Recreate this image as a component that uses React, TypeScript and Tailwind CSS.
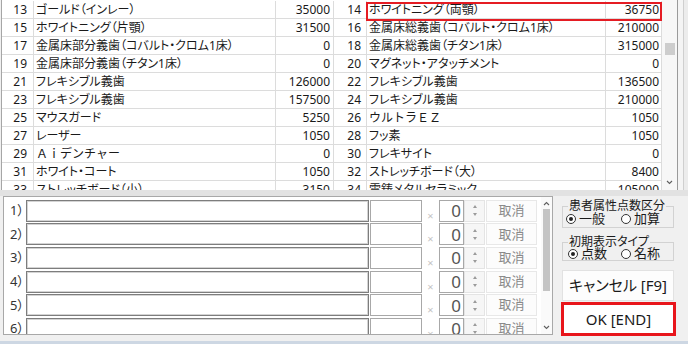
const leftRows = [
  ["13", "ゴールド（インレー）", "35000"],
  ["15", "ホワイトニング（片顎）", "31500"],
  ["17", "金属床部分義歯（コバルト・クロム1床）", "0"],
  ["19", "金属床部分義歯（チタン1床）", "0"],
  ["21", "フレキシブル義歯", "126000"],
  ["23", "フレキシブル義歯", "157500"],
  ["25", "マウスガード", "5250"],
  ["27", "レーザー", "1050"],
  ["29", "Ａｉデンチャー", "0"],
  ["31", "ホワイト・コート", "1050"],
  ["33", "ストレッチボード（小）", "3150"],
];

const rightRows = [
  ["14", "ホワイトニング（両顎）", "36750"],
  ["16", "金属床総義歯（コバルト・クロム1床）", "210000"],
  ["18", "金属床総義歯（チタン1床）", "315000"],
  ["20", "マグネット・アタッチメント", "0"],
  ["22", "フレキシブル義歯", "136500"],
  ["24", "フレキシブル義歯", "210000"],
  ["26", "ウルトラＥＺ", "1050"],
  ["28", "フッ素", "1050"],
  ["30", "フレキサイト", "0"],
  ["32", "ストレッチボード（大）", "8400"],
  ["34", "電鋳メタルセラミック", "105000"],
];

const wide = (s: string) => /[Ａ-Ｚａ-ｚ]/.test(s);

function Chevron({ up }: { up?: boolean }) {
  return (
    <svg width="7" height="5" viewBox="0 0 7 5" className="text-[#606060]">
      <path
        d={up ? "M1 4L3.5 1.5L6 4" : "M1 1L3.5 3.5L6 1"}
        fill="none"
        stroke="currentColor"
        strokeWidth="1.1"
      />
    </svg>
  );
}

function Radio({ label, checked }: { label: string; checked?: boolean }) {
  return (
    <span className="flex items-center gap-[3px] text-[13px] leading-[13px] text-[#1a1a1a]">
      <span className="flex h-[10px] w-[10px] items-center justify-center rounded-full border border-[#333] bg-white">
        {checked && <span className="h-[4px] w-[4px] rounded-full bg-[#222]" />}
      </span>
      {label}
    </span>
  );
}

function InputRow({ n }: { n: number }) {
  return (
    <div className="flex h-[23.6px] shrink-0 items-center">
      <div className="w-[22px] pl-[6px] text-[13px] leading-none text-[#333]">
        {n}）
      </div>
      <div className="h-[22px] w-[343px] border border-[#7d7d7d] bg-white shadow-[inset_0_0_0_1px_#d4d4d4]" />
      <div className="ml-[1px] h-[22px] w-[52px] border border-[#a8a8a8] bg-white" />
      <div className="flex h-[22px] w-[17px] items-end justify-center pb-[1px] text-[11px] leading-none text-[#c4c4c4]">
        ×
      </div>
      <div className="flex h-[22px] w-[25px] items-center justify-end border border-[#a8a8a8] bg-white pr-[2px] text-[17px] leading-none text-[#555]">
        0
      </div>
      <div className="flex h-[22px] w-[21px] flex-col items-center justify-center gap-[5px] border border-[#e4e4e4] bg-[#f6f6f6]">
        <svg width="4" height="3" viewBox="0 0 4 3">
          <path d="M0 3L2 0L4 3Z" fill="#9a9a9a" />
        </svg>
        <svg width="4" height="3" viewBox="0 0 4 3">
          <path d="M0 0L2 3L4 0Z" fill="#9a9a9a" />
        </svg>
      </div>
      <div className="ml-[1px] flex h-[22px] w-[51px] items-center justify-center border border-[#e8e8e8] bg-[#fcfcfc] text-[13px] text-[#8a8a8a]">
        取消
      </div>
    </div>
  );
}

function Group({
  title,
  a,
  b,
  first,
}: {
  title: string;
  a: string;
  b: string;
  first?: boolean;
}) {
  return (
    <div className="flex w-[112px] flex-col">
      <div className="relative z-10 ml-[6px] self-start bg-[#f0f0f0] px-[1px] text-[12px] leading-[11px] text-[#1a1a1a]">
        {title}
      </div>
      <div
        className={`-mt-[5px] flex items-start border border-[#d2d2d2] ${
          first ? "h-[22px] pl-[3px] pt-[5px]" : "h-[19px] pl-[5px] pt-[4px]"
        }`}
      >
        <div className={`flex ${first ? "w-[55px]" : "w-[53px]"}`}>
          <Radio label={a} checked />
        </div>
        <div className="flex">
          <Radio label={b} />
        </div>
      </div>
    </div>
  );
}

export default function App() {
  return (
    <div className="flex h-[344px] w-[688px] flex-col overflow-hidden bg-[#f0f0f0] font-['Noto_Sans','Noto_Sans_CJK_JP',sans-serif] [font-feature-settings:'palt']">
      {/* 一覧 */}
      <div className="relative flex h-[190px] shrink-0 overflow-hidden">
        <div className="ml-[1px] flex border-l border-[#a6a6a6] bg-white">
          <div className="flex w-[660px] flex-col pt-[1px]">
            <div className="h-[1px] bg-[#dcdcdc]" />
            {leftRows.map((l, i) => {
              const r = rightRows[i];
              return (
                <div
                  key={l[0]}
                  className="flex h-[18px] shrink-0 border-b border-[#dcdcdc] text-[12px] leading-[17px] text-[#1a1a1a]"
                >
                  <div className="w-[32px] border-r border-[#dcdcdc] pr-[6px] text-right">{l[0]}</div>
                  <div
                    className={`w-[242px] overflow-hidden whitespace-nowrap border-r border-[#dcdcdc] pl-[2px] ${
                      wide(l[1]) ? "[font-feature-settings:normal]" : ""
                    }`}
                  >
                    {l[1]}
                  </div>
                  <div className="w-[58px] border-r border-[#dcdcdc] pr-[3px] text-right">{l[2]}</div>
                  <div className="w-[33px] border-r border-[#dcdcdc] pr-[5px] text-right">{r[0]}</div>
                  <div
                    className={`w-[239px] overflow-hidden whitespace-nowrap border-r border-[#dcdcdc] pl-[2px] ${
                      wide(r[1]) ? "[font-feature-settings:normal]" : ""
                    }`}
                  >
                    {r[1]}
                  </div>
                  <div className="w-[56px] border-r border-[#dcdcdc] pr-[2px] text-right">{r[2]}</div>
                </div>
              );
            })}
          </div>
          {/* スクロールバー */}
          <div className="flex w-[15px] flex-col items-center bg-[#f7f7f7] pt-[43px]">
            <div className="h-[12px] w-[10px] bg-[#cdcdcd]" />
            <div className="flex-1" />
            <div className="pb-[5px]">
              <Chevron />
            </div>
          </div>
        </div>
        <div className="w-[6px] border-l border-[#9a9a9a] bg-[#f4f4f4]" />
        <div className="flex-1 border-l border-[#cfcfcf] bg-[#ececec]" />

        <div className="absolute left-[366px] top-[2px] h-[19px] w-[296px] border-2 border-[#e51c23]" />
      </div>

      <div className="h-[6px] shrink-0 bg-[#e2e2e2]" />

      {/* 入力欄 */}
      <div className="flex flex-1">
        <div className="ml-[3px] flex h-[139px] w-[550px] overflow-hidden border border-[#a8a8a8] bg-white">
          <div className="flex w-[537px] flex-col overflow-hidden pt-[2px]">
            {[1, 2, 3, 4, 5, 6].map((n) => (
              <InputRow key={n} n={n} />
            ))}
          </div>
          <div className="ml-[4px] flex w-[11px] flex-col items-center bg-[#fafafa] pt-[4px]">
            <Chevron up />
            <div className="mt-[3px] h-[82px] w-[7px] bg-[#c4c4c4]" />
            <div className="flex-1" />
            <div className="pb-[4px]">
              <Chevron />
            </div>
          </div>
        </div>

        <div className="ml-[9px] flex w-[114px] flex-col pt-[4px]">
          <Group title="患者属性点数区分" a="一般" b="加算" first />
          <div className="h-[8px]" />
          <Group title="初期表示タイプ" a="点数" b="名称" />
          <div className="mt-[9px] flex h-[31px] w-[112px] items-center justify-center border border-[#e2e2e2] bg-[#fdfdfd] text-[15px] text-[#1a1a1a]">
            キャンセル [F9]
          </div>
          <div className="-ml-[1px] mt-[1px] flex h-[34px] w-[115px] items-center justify-center border-[3px] border-[#e8151b] bg-white text-[15px] text-[#1a1a1a]">
            OK [END]
          </div>
        </div>
      </div>

      <div className="h-[3px] shrink-0 bg-[#cdd7e3]" />
    </div>
  );
}
